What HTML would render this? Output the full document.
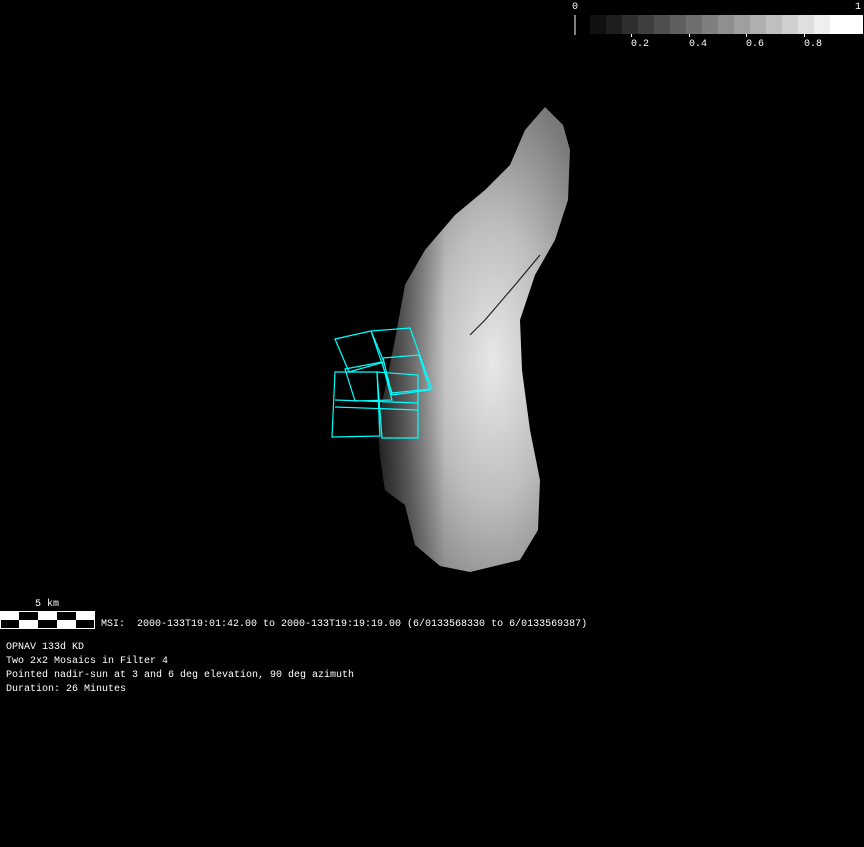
<!DOCTYPE html>
<html><head><style>
body{margin:0;background:#000;width:864px;height:847px;overflow:hidden;position:relative;font-family:"Liberation Mono",monospace;font-size:10px;color:#fff}
.t{position:absolute;white-space:pre;line-height:14px}
</style></head><body>
<svg width="864" height="847" style="position:absolute;left:0;top:0">
<defs>
<radialGradient id="g1" cx="0.6" cy="0.55" r="0.6">
<stop offset="0" stop-color="#e8e8e8"/><stop offset="0.5" stop-color="#bdbdbd"/><stop offset="1" stop-color="#7a7a7a"/>
</radialGradient>
<linearGradient id="g2" x1="0" y1="0" x2="1" y2="0">
<stop offset="0" stop-color="#000" stop-opacity="0.7"/><stop offset="0.35" stop-color="#000" stop-opacity="0"/>
</linearGradient>
</defs>
<polygon fill="url(#g1)" points="545,107 563,125 570,150 568,200 555,240 535,275 520,320 522,370 530,430 540,480 538,530 520,560 470,572 440,566 415,545 405,505 385,490 380,455 378,420 385,390 395,340 405,285 425,250 455,215 485,190 510,165 525,130"/>
<polygon fill="url(#g2)" points="545,107 563,125 570,150 568,200 555,240 535,275 520,320 522,370 530,430 540,480 538,530 520,560 470,572 440,566 415,545 405,505 385,490 380,455 378,420 385,390 395,340 405,285 425,250 455,215 485,190 510,165 525,130"/>
<polyline fill="none" stroke="#222" stroke-width="1.2" points="540,255 515,285 485,320 470,335"/>
<g fill="none" stroke="#0ff" stroke-width="1.2">
<polygon points="335,339 371,331 384,362 349,372"/>
<polygon points="371,331 410,328 432,389 392,393"/>
<polygon points="345,369 382,362 392,400 355,401"/>
<polygon points="383,358 419,355 430,390 392,395"/>
<polygon points="335,372 377,372 380,436 332,437"/>
<polygon points="377,372 418,375 418,438 382,438"/>
<line x1="335" y1="400" x2="418" y2="403"/><line x1="335" y1="407" x2="418" y2="410"/>
</g>
<line x1="575" y1="15" x2="575" y2="35" stroke="#fff"/>
<g>
<rect x="590" y="15" width="17" height="19" fill="#111"/><rect x="606" y="15" width="17" height="19" fill="#1e1e1e"/>
<rect x="622" y="15" width="17" height="19" fill="#2e2e2e"/><rect x="638" y="15" width="17" height="19" fill="#3f3f3f"/>
<rect x="654" y="15" width="17" height="19" fill="#4f4f4f"/><rect x="670" y="15" width="17" height="19" fill="#5f5f5f"/>
<rect x="686" y="15" width="17" height="19" fill="#6f6f6f"/><rect x="702" y="15" width="17" height="19" fill="#7f7f7f"/>
<rect x="718" y="15" width="17" height="19" fill="#8f8f8f"/><rect x="734" y="15" width="17" height="19" fill="#9f9f9f"/>
<rect x="750" y="15" width="17" height="19" fill="#afafaf"/><rect x="766" y="15" width="17" height="19" fill="#bfbfbf"/>
<rect x="782" y="15" width="17" height="19" fill="#cfcfcf"/><rect x="798" y="15" width="17" height="19" fill="#dfdfdf"/>
<rect x="814" y="15" width="17" height="19" fill="#efefef"/><rect x="830" y="15" width="33" height="19" fill="#fff"/>
</g>
<g stroke="#fff"><line x1="631.5" y1="34" x2="631.5" y2="37"/><line x1="689.5" y1="34" x2="689.5" y2="37"/><line x1="746.5" y1="34" x2="746.5" y2="37"/><line x1="804.5" y1="34" x2="804.5" y2="37"/></g>
<rect x="0.5" y="611.5" width="94" height="17" fill="#000" stroke="#fff"/>
<g fill="#fff">
<rect x="0" y="611" width="19" height="9"/><rect x="38" y="611" width="19" height="9"/><rect x="76" y="611" width="19" height="9"/>
<rect x="19" y="620" width="19" height="9"/><rect x="57" y="620" width="19" height="9"/>
</g>
</svg>
<div class="t" style="left:572px;top:1px">0</div>
<div class="t" style="left:855px;top:1px">1</div>
<div class="t" style="left:631px;top:38px">0.2</div>
<div class="t" style="left:689px;top:38px">0.4</div>
<div class="t" style="left:746px;top:38px">0.6</div>
<div class="t" style="left:804px;top:38px">0.8</div>
<div class="t" style="left:35px;top:598px">5 km</div>
<div class="t" style="left:101px;top:618px">MSI:  2000-133T19:01:42.00 to 2000-133T19:19:19.00 (6/0133568330 to 6/0133569387)</div>
<div class="t" style="left:6px;top:641px">OPNAV 133d KD
Two 2x2 Mosaics in Filter 4
Pointed nadir-sun at 3 and 6 deg elevation, 90 deg azimuth
Duration: 26 Minutes</div>
</body></html>
